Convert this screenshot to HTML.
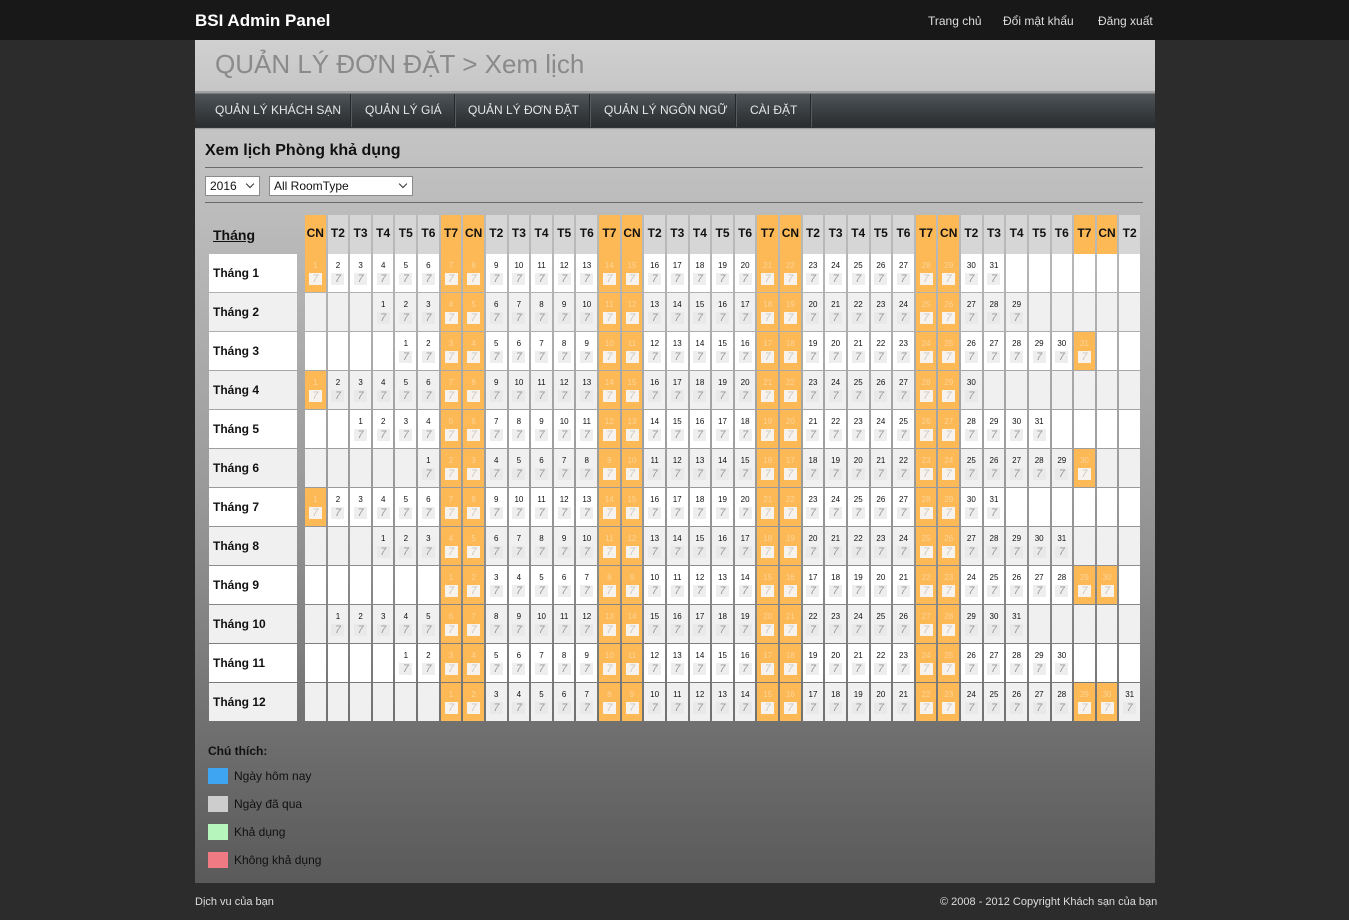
<!DOCTYPE html>
<html><head><meta charset="utf-8">
<style>
*{margin:0;padding:0;box-sizing:border-box}
body{width:1349px;height:920px;background:#2c2c2c;font-family:"Liberation Sans",Arial,sans-serif;position:relative;overflow:hidden}
#top{position:absolute;left:0;top:0;width:1349px;height:40px;background:#181818}
#brand{position:absolute;left:195px;top:11px;color:#fff;font-weight:bold;font-size:17px}
#links{position:absolute;top:14px;left:928px;color:#ddd;font-size:12px;white-space:nowrap}
#links span{position:absolute;top:0}
#hdr{position:absolute;left:195px;top:40px;width:960px;height:53px;background:linear-gradient(#d0d0d0,#c6c6c6)}
#hdr h1{position:absolute;left:20px;top:9px;font-weight:normal;font-size:26px;color:#8a8a8a}
#nav{position:absolute;left:195px;top:91px;width:960px;height:39px;background:linear-gradient(#a0a0a0 0,#a0a0a0 2px,#4e5458 3px,#363a3d 60%,#2a2d30 94%,#b0b0b0 96%,#c4c4c4 100%)}
#nav span{position:absolute;top:12px;color:#e6e6e6;font-size:12px;white-space:nowrap}
#nav i{position:absolute;top:3px;width:2px;height:33px;border-left:1px solid #25282a;border-right:1px solid #555b5f}
#main{position:absolute;left:195px;top:130px;width:960px;height:753px;background:linear-gradient(#c4c4c4 0,#b4b4b4 20%,#979797 50%,#6f6f6f 80%,#5a5a5a 100%)}
#t{position:absolute;left:10px;top:12px;font-size:16px;font-weight:bold;color:#111}
.ln{position:absolute;left:10px;width:938px;height:1px;background:#6a6a6a}
.sel{position:absolute;top:46px;height:20px;background:#fff;border:1px solid #8a8a8a;font-size:12px;padding:2px 4px;color:#111}
.sel:after{content:"";position:absolute;right:6px;top:4px;width:5px;height:5px;border-right:1px solid #333;border-bottom:1px solid #333;transform:rotate(45deg)}
#cal{position:absolute;left:14px;top:85px;width:931px}
.r{display:grid;grid-template-columns:94px repeat(37,1fr);column-gap:2px;height:37px;margin-bottom:2px}
.r>*:first-child{width:88px}
.h>*:first-child{font-size:14px;font-weight:bold;text-decoration:underline;padding:12px 4px;color:#111}
.h>i{background:#d6d6d6;font-style:normal;font-weight:bold;font-size:12px;text-align:center;line-height:37px;color:#111}
.h>i:nth-child(7n+2),.h>i:nth-child(7n+8){background:#fdb955}
.d>b{background:#fff;font-size:12px;font-weight:bold;padding:12px 4px;color:#111}
.d.g>b{background:#f0f0f0}
.d>i{background:#fff;font-style:normal;font-size:8px;text-align:center;padding-top:7px;line-height:9px;color:#111}
.d.g>i{background:#f0f0f0}
.d>i b{display:block;width:13px;height:12px;margin:3px auto 0;background:#eee;font-weight:normal;font-size:11px;line-height:12px;color:#999;font-style:italic}
.d.g>i b{background:#e9e9e9}
.d>i:nth-child(7n+2):not(:empty),.d>i:nth-child(7n+8):not(:empty){background:#fdb955;color:#fcd49a}
.d>i:nth-child(7n+2):not(:empty) b,.d>i:nth-child(7n+8):not(:empty) b{background:#f7f3ec;color:#c8c8c8}
#lg{position:absolute;left:13px;top:614px;font-size:12px;color:#111}
#lg b{display:block;margin-bottom:10px}
#lg div{height:28px;position:relative;padding-left:26px;line-height:16px}
#lg div:before{content:"";position:absolute;left:0;top:0;width:20px;height:16px;background:var(--c)}
#ft{position:absolute;top:896px;font-size:11px;color:#ddd}
</style></head><body>
<div id="top"><div id="brand">BSI Admin Panel</div>
<div id="links"><span style="left:0">Trang chủ</span><span style="left:75px">Đổi mật khẩu</span><span style="left:170px">Đăng xuất</span></div></div>
<div id="hdr"><h1>QUẢN LÝ ĐƠN ĐẶT &gt; Xem lịch</h1></div>
<div id="nav">
<span style="left:20px">QUẢN LÝ KHÁCH SẠN</span><i style="left:155px"></i>
<span style="left:170px">QUẢN LÝ GIÁ</span><i style="left:259px"></i>
<span style="left:273px">QUẢN LÝ ĐƠN ĐẶT</span><i style="left:394px"></i>
<span style="left:409px">QUẢN LÝ NGÔN NGỮ</span><i style="left:540px"></i>
<span style="left:555px">CÀI ĐẶT</span><i style="left:615px"></i>
</div>
<div id="main">
<div id="t">Xem lịch Phòng khả dụng</div>
<div class="ln" style="top:37px"></div>
<div class="sel" style="left:10px;width:55px">2016</div>
<div class="sel" style="left:74px;width:144px">All RoomType</div>
<div class="ln" style="top:72px"></div>
<div id="cal">
<div class="r h"><span>Tháng</span><i>CN</i><i>T2</i><i>T3</i><i>T4</i><i>T5</i><i>T6</i><i>T7</i><i>CN</i><i>T2</i><i>T3</i><i>T4</i><i>T5</i><i>T6</i><i>T7</i><i>CN</i><i>T2</i><i>T3</i><i>T4</i><i>T5</i><i>T6</i><i>T7</i><i>CN</i><i>T2</i><i>T3</i><i>T4</i><i>T5</i><i>T6</i><i>T7</i><i>CN</i><i>T2</i><i>T3</i><i>T4</i><i>T5</i><i>T6</i><i>T7</i><i>CN</i><i>T2</i></div>
<div class="r d"><b>Tháng 1</b><i>1<b>7</b></i><i>2<b>7</b></i><i>3<b>7</b></i><i>4<b>7</b></i><i>5<b>7</b></i><i>6<b>7</b></i><i>7<b>7</b></i><i>8<b>7</b></i><i>9<b>7</b></i><i>10<b>7</b></i><i>11<b>7</b></i><i>12<b>7</b></i><i>13<b>7</b></i><i>14<b>7</b></i><i>15<b>7</b></i><i>16<b>7</b></i><i>17<b>7</b></i><i>18<b>7</b></i><i>19<b>7</b></i><i>20<b>7</b></i><i>21<b>7</b></i><i>22<b>7</b></i><i>23<b>7</b></i><i>24<b>7</b></i><i>25<b>7</b></i><i>26<b>7</b></i><i>27<b>7</b></i><i>28<b>7</b></i><i>29<b>7</b></i><i>30<b>7</b></i><i>31<b>7</b></i><i></i><i></i><i></i><i></i><i></i><i></i></div>
<div class="r d g"><b>Tháng 2</b><i></i><i></i><i></i><i>1<b>7</b></i><i>2<b>7</b></i><i>3<b>7</b></i><i>4<b>7</b></i><i>5<b>7</b></i><i>6<b>7</b></i><i>7<b>7</b></i><i>8<b>7</b></i><i>9<b>7</b></i><i>10<b>7</b></i><i>11<b>7</b></i><i>12<b>7</b></i><i>13<b>7</b></i><i>14<b>7</b></i><i>15<b>7</b></i><i>16<b>7</b></i><i>17<b>7</b></i><i>18<b>7</b></i><i>19<b>7</b></i><i>20<b>7</b></i><i>21<b>7</b></i><i>22<b>7</b></i><i>23<b>7</b></i><i>24<b>7</b></i><i>25<b>7</b></i><i>26<b>7</b></i><i>27<b>7</b></i><i>28<b>7</b></i><i>29<b>7</b></i><i></i><i></i><i></i><i></i><i></i></div>
<div class="r d"><b>Tháng 3</b><i></i><i></i><i></i><i></i><i>1<b>7</b></i><i>2<b>7</b></i><i>3<b>7</b></i><i>4<b>7</b></i><i>5<b>7</b></i><i>6<b>7</b></i><i>7<b>7</b></i><i>8<b>7</b></i><i>9<b>7</b></i><i>10<b>7</b></i><i>11<b>7</b></i><i>12<b>7</b></i><i>13<b>7</b></i><i>14<b>7</b></i><i>15<b>7</b></i><i>16<b>7</b></i><i>17<b>7</b></i><i>18<b>7</b></i><i>19<b>7</b></i><i>20<b>7</b></i><i>21<b>7</b></i><i>22<b>7</b></i><i>23<b>7</b></i><i>24<b>7</b></i><i>25<b>7</b></i><i>26<b>7</b></i><i>27<b>7</b></i><i>28<b>7</b></i><i>29<b>7</b></i><i>30<b>7</b></i><i>31<b>7</b></i><i></i><i></i></div>
<div class="r d g"><b>Tháng 4</b><i>1<b>7</b></i><i>2<b>7</b></i><i>3<b>7</b></i><i>4<b>7</b></i><i>5<b>7</b></i><i>6<b>7</b></i><i>7<b>7</b></i><i>8<b>7</b></i><i>9<b>7</b></i><i>10<b>7</b></i><i>11<b>7</b></i><i>12<b>7</b></i><i>13<b>7</b></i><i>14<b>7</b></i><i>15<b>7</b></i><i>16<b>7</b></i><i>17<b>7</b></i><i>18<b>7</b></i><i>19<b>7</b></i><i>20<b>7</b></i><i>21<b>7</b></i><i>22<b>7</b></i><i>23<b>7</b></i><i>24<b>7</b></i><i>25<b>7</b></i><i>26<b>7</b></i><i>27<b>7</b></i><i>28<b>7</b></i><i>29<b>7</b></i><i>30<b>7</b></i><i></i><i></i><i></i><i></i><i></i><i></i><i></i></div>
<div class="r d"><b>Tháng 5</b><i></i><i></i><i>1<b>7</b></i><i>2<b>7</b></i><i>3<b>7</b></i><i>4<b>7</b></i><i>5<b>7</b></i><i>6<b>7</b></i><i>7<b>7</b></i><i>8<b>7</b></i><i>9<b>7</b></i><i>10<b>7</b></i><i>11<b>7</b></i><i>12<b>7</b></i><i>13<b>7</b></i><i>14<b>7</b></i><i>15<b>7</b></i><i>16<b>7</b></i><i>17<b>7</b></i><i>18<b>7</b></i><i>19<b>7</b></i><i>20<b>7</b></i><i>21<b>7</b></i><i>22<b>7</b></i><i>23<b>7</b></i><i>24<b>7</b></i><i>25<b>7</b></i><i>26<b>7</b></i><i>27<b>7</b></i><i>28<b>7</b></i><i>29<b>7</b></i><i>30<b>7</b></i><i>31<b>7</b></i><i></i><i></i><i></i><i></i></div>
<div class="r d g"><b>Tháng 6</b><i></i><i></i><i></i><i></i><i></i><i>1<b>7</b></i><i>2<b>7</b></i><i>3<b>7</b></i><i>4<b>7</b></i><i>5<b>7</b></i><i>6<b>7</b></i><i>7<b>7</b></i><i>8<b>7</b></i><i>9<b>7</b></i><i>10<b>7</b></i><i>11<b>7</b></i><i>12<b>7</b></i><i>13<b>7</b></i><i>14<b>7</b></i><i>15<b>7</b></i><i>16<b>7</b></i><i>17<b>7</b></i><i>18<b>7</b></i><i>19<b>7</b></i><i>20<b>7</b></i><i>21<b>7</b></i><i>22<b>7</b></i><i>23<b>7</b></i><i>24<b>7</b></i><i>25<b>7</b></i><i>26<b>7</b></i><i>27<b>7</b></i><i>28<b>7</b></i><i>29<b>7</b></i><i>30<b>7</b></i><i></i><i></i></div>
<div class="r d"><b>Tháng 7</b><i>1<b>7</b></i><i>2<b>7</b></i><i>3<b>7</b></i><i>4<b>7</b></i><i>5<b>7</b></i><i>6<b>7</b></i><i>7<b>7</b></i><i>8<b>7</b></i><i>9<b>7</b></i><i>10<b>7</b></i><i>11<b>7</b></i><i>12<b>7</b></i><i>13<b>7</b></i><i>14<b>7</b></i><i>15<b>7</b></i><i>16<b>7</b></i><i>17<b>7</b></i><i>18<b>7</b></i><i>19<b>7</b></i><i>20<b>7</b></i><i>21<b>7</b></i><i>22<b>7</b></i><i>23<b>7</b></i><i>24<b>7</b></i><i>25<b>7</b></i><i>26<b>7</b></i><i>27<b>7</b></i><i>28<b>7</b></i><i>29<b>7</b></i><i>30<b>7</b></i><i>31<b>7</b></i><i></i><i></i><i></i><i></i><i></i><i></i></div>
<div class="r d g"><b>Tháng 8</b><i></i><i></i><i></i><i>1<b>7</b></i><i>2<b>7</b></i><i>3<b>7</b></i><i>4<b>7</b></i><i>5<b>7</b></i><i>6<b>7</b></i><i>7<b>7</b></i><i>8<b>7</b></i><i>9<b>7</b></i><i>10<b>7</b></i><i>11<b>7</b></i><i>12<b>7</b></i><i>13<b>7</b></i><i>14<b>7</b></i><i>15<b>7</b></i><i>16<b>7</b></i><i>17<b>7</b></i><i>18<b>7</b></i><i>19<b>7</b></i><i>20<b>7</b></i><i>21<b>7</b></i><i>22<b>7</b></i><i>23<b>7</b></i><i>24<b>7</b></i><i>25<b>7</b></i><i>26<b>7</b></i><i>27<b>7</b></i><i>28<b>7</b></i><i>29<b>7</b></i><i>30<b>7</b></i><i>31<b>7</b></i><i></i><i></i><i></i></div>
<div class="r d"><b>Tháng 9</b><i></i><i></i><i></i><i></i><i></i><i></i><i>1<b>7</b></i><i>2<b>7</b></i><i>3<b>7</b></i><i>4<b>7</b></i><i>5<b>7</b></i><i>6<b>7</b></i><i>7<b>7</b></i><i>8<b>7</b></i><i>9<b>7</b></i><i>10<b>7</b></i><i>11<b>7</b></i><i>12<b>7</b></i><i>13<b>7</b></i><i>14<b>7</b></i><i>15<b>7</b></i><i>16<b>7</b></i><i>17<b>7</b></i><i>18<b>7</b></i><i>19<b>7</b></i><i>20<b>7</b></i><i>21<b>7</b></i><i>22<b>7</b></i><i>23<b>7</b></i><i>24<b>7</b></i><i>25<b>7</b></i><i>26<b>7</b></i><i>27<b>7</b></i><i>28<b>7</b></i><i>29<b>7</b></i><i>30<b>7</b></i><i></i></div>
<div class="r d g"><b>Tháng 10</b><i></i><i>1<b>7</b></i><i>2<b>7</b></i><i>3<b>7</b></i><i>4<b>7</b></i><i>5<b>7</b></i><i>6<b>7</b></i><i>7<b>7</b></i><i>8<b>7</b></i><i>9<b>7</b></i><i>10<b>7</b></i><i>11<b>7</b></i><i>12<b>7</b></i><i>13<b>7</b></i><i>14<b>7</b></i><i>15<b>7</b></i><i>16<b>7</b></i><i>17<b>7</b></i><i>18<b>7</b></i><i>19<b>7</b></i><i>20<b>7</b></i><i>21<b>7</b></i><i>22<b>7</b></i><i>23<b>7</b></i><i>24<b>7</b></i><i>25<b>7</b></i><i>26<b>7</b></i><i>27<b>7</b></i><i>28<b>7</b></i><i>29<b>7</b></i><i>30<b>7</b></i><i>31<b>7</b></i><i></i><i></i><i></i><i></i><i></i></div>
<div class="r d"><b>Tháng 11</b><i></i><i></i><i></i><i></i><i>1<b>7</b></i><i>2<b>7</b></i><i>3<b>7</b></i><i>4<b>7</b></i><i>5<b>7</b></i><i>6<b>7</b></i><i>7<b>7</b></i><i>8<b>7</b></i><i>9<b>7</b></i><i>10<b>7</b></i><i>11<b>7</b></i><i>12<b>7</b></i><i>13<b>7</b></i><i>14<b>7</b></i><i>15<b>7</b></i><i>16<b>7</b></i><i>17<b>7</b></i><i>18<b>7</b></i><i>19<b>7</b></i><i>20<b>7</b></i><i>21<b>7</b></i><i>22<b>7</b></i><i>23<b>7</b></i><i>24<b>7</b></i><i>25<b>7</b></i><i>26<b>7</b></i><i>27<b>7</b></i><i>28<b>7</b></i><i>29<b>7</b></i><i>30<b>7</b></i><i></i><i></i><i></i></div>
<div class="r d g"><b>Tháng 12</b><i></i><i></i><i></i><i></i><i></i><i></i><i>1<b>7</b></i><i>2<b>7</b></i><i>3<b>7</b></i><i>4<b>7</b></i><i>5<b>7</b></i><i>6<b>7</b></i><i>7<b>7</b></i><i>8<b>7</b></i><i>9<b>7</b></i><i>10<b>7</b></i><i>11<b>7</b></i><i>12<b>7</b></i><i>13<b>7</b></i><i>14<b>7</b></i><i>15<b>7</b></i><i>16<b>7</b></i><i>17<b>7</b></i><i>18<b>7</b></i><i>19<b>7</b></i><i>20<b>7</b></i><i>21<b>7</b></i><i>22<b>7</b></i><i>23<b>7</b></i><i>24<b>7</b></i><i>25<b>7</b></i><i>26<b>7</b></i><i>27<b>7</b></i><i>28<b>7</b></i><i>29<b>7</b></i><i>30<b>7</b></i><i>31<b>7</b></i></div>
</div>
<div id="lg"><b>Chú thích:</b>
<div style="--c:#3ea5f2">Ngày hôm nay</div>
<div style="--c:#cdcdcd">Ngày đã qua</div>
<div style="--c:#b6f5bc">Khả dụng</div>
<div style="--c:#f07a84">Không khả dụng</div>
</div>
</div>
<div id="ft" style="left:195px">Dịch vu của bạn</div>
<div id="ft" style="left:940px">© 2008 - 2012 Copyright Khách sạn của bạn</div>
</body></html>
